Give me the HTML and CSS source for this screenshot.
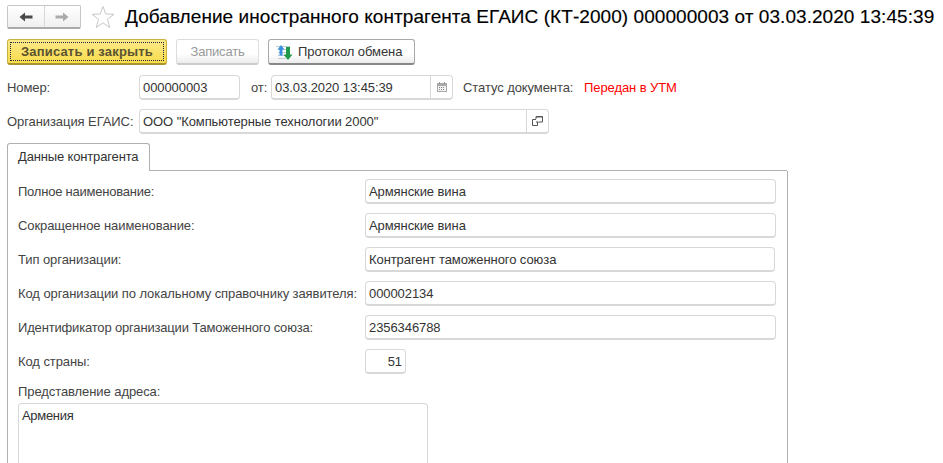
FILE: index.html
```html
<!DOCTYPE html>
<html lang="ru">
<head>
<meta charset="utf-8">
<title>Добавление иностранного контрагента</title>
<link rel="stylesheet" href="styles.css">
</head>
<body>
<div class="page">
  <header class="head">
    <div class="nav">
      <span class="nav-btn"><svg width="16" height="12" viewBox="0 0 16 12"><path d="M1.500 6 L7 1.500 V4.500 H14.500 V7.500 H7 V10.500 Z" fill="#4a4a4a"/></svg></span>
      <span class="nav-btn nav-btn-r"><svg width="16" height="12" viewBox="0 0 16 12"><path d="M14.500 6 L9 1.500 V4.500 H1.500 V7.500 H9 V10.500 Z" fill="#aaa"/></svg></span>
    </div>
    <svg class="star" width="24" height="24" viewBox="0 0 24 24"><path d="M12 1.500 L14.800 9 L23 9.300 L16.500 14.300 L18.800 22.500 L12 17.800 L5.200 22.500 L7.500 14.300 L1 9.300 L9.200 9 Z" fill="#fff" stroke="#c8c8c8"/></svg>
    <h1 class="title">Добавление иностранного контрагента ЕГАИС (КТ-2000) 000000003 от 03.03.2020 13:45:39</h1>
  </header>
  <div class="toolbar">
    <button class="btn btn-primary"><span class="focus">Записать и закрыть</span></button>
    <button class="btn btn-save">Записать</button>
    <button class="btn btn-log">
      <svg width="18" height="18" viewBox="0 0 18 18"><path d="M1 3.500h14M3 6.500h12M3 9.500h10M3 12.500h10M3 15.500h8" stroke="#c2ccd6" fill="none"/><path d="M6 2 L9.500 6.500 H7.500 V12.500 H4.500 V6.500 H2.500 Z" fill="#3a8fe0"/><path d="M13 17 L8.500 11.500 H11 V4 H15 V11.500 H17.500 Z" fill="#1e9a48"/></svg>
      <span>Протокол обмена</span>
    </button>
  </div>
  <div class="row row-num">
    <span class="lbl lbl-num">Номер:</span>
    <div class="field f-num"><span class="val">000000003</span></div>
    <span class="lbl lbl-ot">от:</span>
    <div class="field f-date">
      <span class="val">03.03.2020 13:45:39</span>
      <span class="addon"><svg width="10" height="10" viewBox="0 0 10 10"><path d="M0 1h10v9H0z" fill="#a8a8a8"/><path d="M1 4h8v5H1z" fill="#f2f2f2"/><path d="M2 0h1v2H2zM7 0h1v2H7z" fill="#999"/><path d="M2 5h1v1H2zM4 5h1v1H4zM6 5h1v1H6zM2 7h1v1H2zM4 7h1v1H4zM6 7h1v1H6z" fill="#888"/></svg></span>
    </div>
    <span class="lbl lbl-status">Статус документа:</span>
    <span class="status">Передан в УТМ</span>
  </div>
  <div class="row row-org">
    <span class="lbl lbl-org">Организация ЕГАИС:</span>
    <div class="field f-org">
      <span class="val">ООО "Компьютерные технологии 2000"</span>
      <span class="addon addon-org"><svg width="11" height="10" viewBox="0 0 11 10"><path d="M4 .5h6.500v5.500H4z" fill="#fff" stroke="#555"/><path d="M4 1h6.500" stroke="#555" fill="none"/><path d="M.5 3.500h5v6h-5z" fill="#fff" stroke="#555"/><path d="M4 3h2.500v3H4z" fill="#fff"/><path d="M4 6h2" stroke="#555" fill="none"/></svg></span>
    </div>
  </div>
  <div class="tabs">
    <div class="tab">Данные контрагента</div>
    <div class="tab-rest"></div>
  </div>
  <section class="panel">
    <div class="form-row"><span class="flbl flbl-tight">Полное наименование:</span><div class="field f-wide"><span class="val">Армянские вина</span></div></div>
    <div class="form-row"><span class="flbl">Сокращенное наименование:</span><div class="field f-wide"><span class="val">Армянские вина</span></div></div>
    <div class="form-row"><span class="flbl">Тип организации:</span><div class="field f-wide f-narrow"><span class="val">Контрагент таможенного союза</span></div></div>
    <div class="form-row"><span class="flbl">Код организации по локальному справочнику заявителя:</span><div class="field f-wide"><span class="val">000002134</span></div></div>
    <div class="form-row"><span class="flbl flbl-tight2">Идентификатор организации Таможенного союза:</span><div class="field f-wide"><span class="val">2356346788</span></div></div>
    <div class="form-row"><span class="flbl">Код страны:</span><div class="field f-code"><span class="val val-r">51</span></div></div>
    <div class="addr-lbl">Представление адреса:</div>
    <div class="field f-addr"><span class="val val-tight">Армения</span></div>
  </section>
</div>
</body>
</html>
```
FILE: styles.css
```css
* { box-sizing: border-box; }
html, body { margin: 0; padding: 0; height: 463px; overflow: hidden; background: #fff; }
body { font-family: "Liberation Sans", Arial, sans-serif; font-size: 13px; letter-spacing: -0.08px; color: #333; }
.page { height: 463px; overflow: hidden; padding: 5px 0 0 7px; }

.head { display: flex; align-items: center; height: 24px; }
.nav { display: flex; width: 74px; height: 24px; border: 1px solid #c6c6c6; border-bottom: 2px solid #aaa; border-radius: 2px; background: linear-gradient(#fff, #f0f0f0); }
.nav-btn { flex: 1; display: flex; align-items: center; justify-content: center; }
.nav-btn-r { border-left: 1px solid #d8d8d8; }
.star { margin-left: 10px; flex: none; }
.title { margin: 0 0 0 10px; font-size: 19px; letter-spacing: 0.06px; font-weight: 400; color: #000; white-space: nowrap; line-height: 24px; -webkit-text-stroke: 0.15px #000; }

.toolbar { display: flex; gap: 9px; margin-top: 10px; height: 26px; }
.btn { font: inherit; letter-spacing: inherit; height: 26px; padding: 0; border-radius: 3px; display: flex; align-items: center; justify-content: center; color: #333; background: linear-gradient(#fff 60%, #ececec); border: 1px solid #bbb; border-bottom: 2px solid #999; }
.btn-primary { width: 160px; padding: 2px; background: linear-gradient(#fbe98a, #f8dc4a); border-color: #c9b23e; border-bottom-color: #a99430; font-weight: 700; color: #5b5330; letter-spacing: 0.18px; }
.focus { flex: 1; height: 100%; display: flex; align-items: center; justify-content: center; border: 1px dotted #224; }
.btn-save { width: 83px; color: #999; border-color: #ddd; border-bottom-color: #ccc; letter-spacing: -0.2px; }
.btn-log { width: 147px; gap: 5px; border-color: #aaa; border-bottom-color: #888; justify-content: flex-start; padding-left: 6px; }

.row { display: flex; align-items: center; height: 25px; }
.row-num { margin-top: 10px; }
.row-org { margin-top: 9px; }
.lbl { white-space: nowrap; color: #444; }
.lbl-num { width: 132px; }
.lbl-ot { width: 31px; padding-left: 11px; }
.lbl-org { width: 132px; }
.lbl-status { margin-left: 10px; width: 121px; }
.status { color: #f00; white-space: nowrap; }

.field { display: flex; align-items: center; height: 25px; border: 1px solid #d8d8d8; border-bottom-width: 2px; border-radius: 4px; background: #fff; color: #333; flex: none; }
.val { flex: 1; padding-left: 3px; white-space: nowrap; }
.val-r { text-align: right; padding-right: 3px; }
.val-tight { letter-spacing: -0.3px; }
.f-num { width: 101px; }
.f-date { width: 182px; }
.f-org { width: 410px; }
.addon { width: 22px; height: 100%; flex: none; display: flex; align-items: center; justify-content: center; border-left: 1px solid #d8d8d8; }

.tabs { display: flex; margin-top: 9px; height: 28px; }
.tab { width: 143px; height: 28px; border: 1px solid #b0b0b0; border-bottom: 0; border-radius: 3px 3px 0 0; padding-left: 10px; line-height: 26px; background: #fff; color: #333; letter-spacing: -0.15px; }
.tab-rest { width: 637px; border-bottom: 1px solid #b0b0b0; }

.panel { width: 781px; height: 320px; border: 1px solid #b0b0b0; border-top: 0; padding: 8px 0 0 10px; }
.form-row { display: flex; align-items: center; height: 25px; margin-bottom: 9px; }
.flbl { width: 347px; white-space: nowrap; color: #444; flex: none; }
.flbl-tight { letter-spacing: -0.22px; }
.flbl-tight2 { letter-spacing: -0.17px; }
.f-wide { width: 411px; }
.f-narrow { width: 410px; }
.f-code { width: 41px; }
.addr-lbl { margin-top: 8px; height: 20px; line-height: 17px; color: #444; }
.f-addr { width: 410px; height: 100px; align-items: flex-start; padding-top: 4px; }
```
